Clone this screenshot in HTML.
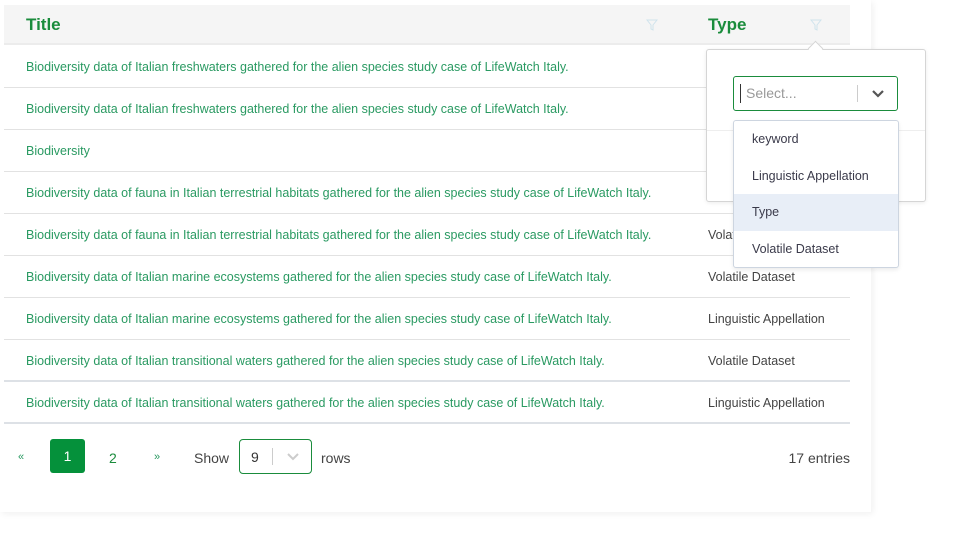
<!DOCTYPE html>
<html><head><style>
body{margin:0;width:962px;height:547px;background:#fff;font-family:"Liberation Sans",sans-serif;position:relative;overflow:hidden}
.card{position:absolute;left:0;top:0;width:871px;height:512px;background:#fff;box-shadow:2px 2px 6px rgba(0,0,0,0.06)}
.hdr{position:absolute;left:4px;top:5px;width:846px;height:38px;background:#f5f5f5;border-bottom:2px solid #ececec}
.hdr span{position:absolute;top:10px;font-size:17px;font-weight:bold;color:#1a8c3c}
.row{position:absolute;left:4px;width:846px;height:41px;border-bottom:1px solid #e2e2e2;font-size:12.5px}
.row .t{position:absolute;left:22px;top:14px;color:#2a9a62}
.row .y{position:absolute;left:704px;top:14px;color:#444}
.filt{position:absolute;top:14px;width:12px;height:12px}
.pop{position:absolute;left:706px;top:49px;width:218px;height:151px;background:#fff;border:1px solid #d5d5d5;border-radius:3px;box-shadow:0 1px 4px rgba(0,0,0,.08)}
.sel{position:absolute;left:733px;top:76px;width:163px;height:33px;border:1px solid #1a8c3c;border-radius:3px;background:#fff}
.menu{position:absolute;left:733px;top:120px;width:164px;height:146px;border:1px solid #cdd5e0;border-radius:3px;background:#fff;box-shadow:0 2px 4px rgba(0,0,0,.08)}
.menu div{height:36.5px;line-height:37.5px;padding-left:18px;font-size:12.5px;color:#3a3a4a}
.pg{position:absolute;font-size:14px;color:#444}
</style></head><body>
<div class="card"></div>
<div class="hdr"><span style="left:22px">Title</span><span style="left:704px">Type</span>
<svg class="filt" style="left:642px" viewBox="0 0 12 12"><path d="M1 1H11L7 6V11L5 10V6Z" fill="none" stroke="#cfe3ec" stroke-width="1"/></svg>
<svg class="filt" style="left:806px" viewBox="0 0 12 12"><path d="M1 1H11L7 6V11L5 10V6Z" fill="none" stroke="#cfe3ec" stroke-width="1"/></svg>
</div>
<div class="row" style="top:46px"><span class="t">Biodiversity data of Italian freshwaters gathered for the alien species study case of LifeWatch Italy.</span></div>
<div class="row" style="top:88px"><span class="t">Biodiversity data of Italian freshwaters gathered for the alien species study case of LifeWatch Italy.</span></div>
<div class="row" style="top:130px"><span class="t">Biodiversity</span></div>
<div class="row" style="top:172px"><span class="t">Biodiversity data of fauna in Italian terrestrial habitats gathered for the alien species study case of LifeWatch Italy.</span></div>
<div class="row" style="top:214px"><span class="t">Biodiversity data of fauna in Italian terrestrial habitats gathered for the alien species study case of LifeWatch Italy.</span><span class="y">Volatile Dataset</span></div>
<div class="row" style="top:256px"><span class="t">Biodiversity data of Italian marine ecosystems gathered for the alien species study case of LifeWatch Italy.</span><span class="y">Volatile Dataset</span></div>
<div class="row" style="top:298px"><span class="t">Biodiversity data of Italian marine ecosystems gathered for the alien species study case of LifeWatch Italy.</span><span class="y">Linguistic Appellation</span></div>
<div class="row" style="top:340px;border-bottom:2px solid #dde1e6;height:40px"><span class="t">Biodiversity data of Italian transitional waters gathered for the alien species study case of LifeWatch Italy.</span><span class="y">Volatile Dataset</span></div>
<div class="row" style="top:382px;border-bottom:2px solid #dde1e6;height:40px"><span class="t">Biodiversity data of Italian transitional waters gathered for the alien species study case of LifeWatch Italy.</span><span class="y">Linguistic Appellation</span></div>

<div class="pop"><div style="position:absolute;left:0;right:0;top:80px;border-top:1px solid #eee"></div></div>
<div style="position:absolute;left:810px;top:43px;width:10px;height:10px;background:#fff;border-left:1px solid #d5d5d5;border-top:1px solid #d5d5d5;transform:rotate(45deg)"></div>
<div class="sel"><div style="position:absolute;left:6px;top:7px;width:1px;height:19px;background:#333"></div><span style="position:absolute;left:12px;top:8px;font-size:14px;color:#999">Select...</span><div style="position:absolute;left:123px;top:8px;width:1px;height:17px;background:#ccc"></div>
<svg style="position:absolute;left:137px;top:12px" width="14" height="10" viewBox="0 0 14 10"><path d="M2 2L7 7L12 2" fill="none" stroke="#555" stroke-width="2.2"/></svg></div>
<div class="menu"><div>keyword</div><div>Linguistic Appellation</div><div style="background:#e8eef7">Type</div><div>Volatile Dataset</div></div>

<span class="pg" style="left:18px;top:451px;font-size:11px;color:#2a9a62">«</span>
<div style="position:absolute;left:50px;top:439px;width:35px;height:34px;background:#05913b;border-radius:3px;color:#fff;font-size:14px;text-align:center;line-height:34px">1</div>
<span class="pg" style="left:109px;top:450px;color:#1a8c3c">2</span>
<span class="pg" style="left:154px;top:451px;font-size:11px;color:#2a9a62">»</span>
<span class="pg" style="left:194px;top:450px">Show</span>
<div style="position:absolute;left:239px;top:439px;width:71px;height:33px;border:1px solid #1a8c3c;border-radius:4px">
<span style="position:absolute;left:11px;top:9px;font-size:14px;color:#333">9</span>
<div style="position:absolute;left:32px;top:8px;width:1px;height:17px;background:#ccc"></div>
<svg style="position:absolute;left:46px;top:12px" width="14" height="10" viewBox="0 0 14 10"><path d="M2 2L7 7L12 2" fill="none" stroke="#ccc" stroke-width="2"/></svg></div>
<span class="pg" style="left:321px;top:450px">rows</span>
<span class="pg" style="right:112px;top:450px">17 entries</span>
</body></html>
